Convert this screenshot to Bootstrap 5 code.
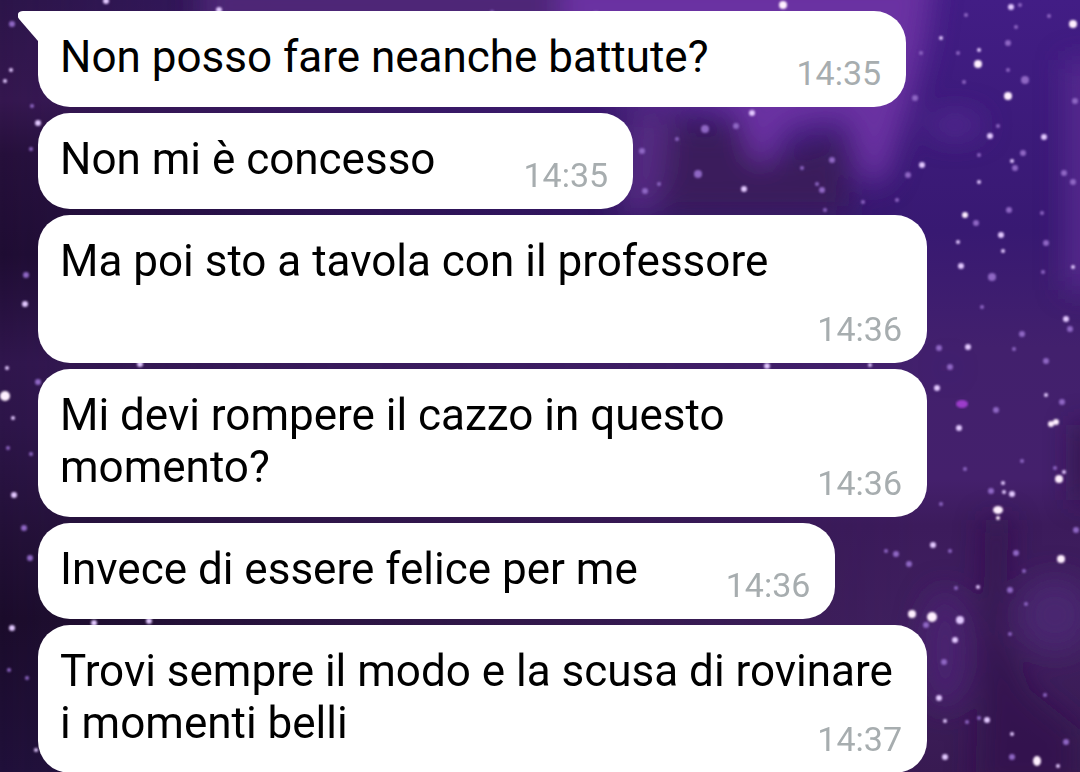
<!DOCTYPE html>
<html lang="it">
<head>
<meta charset="utf-8">
<meta name="viewport" content="width=device-width, initial-scale=1">
<title>Chat</title>
<link href="https://cdn.jsdelivr.net/npm/bootstrap@5.3.0/dist/css/bootstrap.min.css" rel="stylesheet">
<style>
body { font-family: Roboto, sans-serif; background: #2a1449; }
.chat { height: 100vh; }
.sky { position: absolute; inset: 0; width: 100%; height: 100%; }
.thread { gap: 6px; padding: 11px 153px 0 38px; }
.bubble { max-width: 100%; border-radius: 32px; padding: 20px 25px 14px 22px; font-size: 44px; line-height: 52px; color: #000; display: flow-root; }
.bubble.first { border-top-left-radius: 0; }
.tail { position: absolute; top: 0; left: -20px; width: 22px; height: 32px; }
.stamp { margin: 22px 0 0 88px; font-size: 34px; line-height: 40px; color: #a7adaf; }
</style>
</head>
<body>
<main class="chat position-relative overflow-hidden">
<svg class="sky" viewBox="0 0 1080 772" preserveAspectRatio="xMidYMid slice" aria-hidden="true">
<defs>
<linearGradient id="left" x1="0" y1="0" x2="0" y2="1"><stop offset="0" stop-color="#2c1549"/><stop offset=".13" stop-color="#35174f"/><stop offset=".2" stop-color="#26103b"/><stop offset=".33" stop-color="#1f0d33"/><stop offset=".47" stop-color="#30164d"/><stop offset=".55" stop-color="#2d1549"/><stop offset=".7" stop-color="#221036"/><stop offset=".8" stop-color="#1b0c2b"/><stop offset="1" stop-color="#20103a"/></linearGradient>
<linearGradient id="right" x1="0" y1="0" x2="0" y2="1"><stop offset="0" stop-color="#421d85"/><stop offset=".3" stop-color="#381972"/><stop offset=".45" stop-color="#42206d"/><stop offset=".62" stop-color="#44206c"/><stop offset=".68" stop-color="#3c1b5c"/><stop offset=".82" stop-color="#40205f"/><stop offset="1" stop-color="#381a52"/></linearGradient>
<linearGradient id="fade"><stop offset="0" stop-color="#fff" stop-opacity="0"/><stop offset=".3" stop-color="#fff" stop-opacity=".45"/><stop offset=".85" stop-color="#fff"/></linearGradient>
<mask id="side"><rect width="1080" height="772" fill="url(#fade)"/></mask>
<filter id="cloud" x="-50%" y="-50%" width="200%" height="200%"><feGaussianBlur stdDeviation="14"/></filter>
<filter id="glow" x="-5%" y="-5%" width="110%" height="110%"><feGaussianBlur stdDeviation="0.8"/></filter>
</defs>
<rect width="1080" height="772" fill="url(#left)"/>
<rect width="1080" height="772" fill="url(#right)" mask="url(#side)"/>
<g filter="url(#cloud)">
<rect x="200" y="-20" width="520" height="50" fill="#4f2778"/>
<path fill="#6a33a2" d="M560-30H935L925 45 908 110 885 180 865 185 845 120 790 128 765 170 750 160 735 112 560 80Z"/>
<path fill="#552a82" d="M625 110H680L655 215H620Z"/>
<path fill="#3b1c5b" d="M670 125H740L755 165 845 135 850 215H660Z"/>
<ellipse cx="955" cy="125" rx="28" ry="12" fill="#552b92"/>
<path fill="#5a2c92" opacity=".8" d="M1065 60H1110V290H1065Z"/>
<path fill="#321348" d="M1075 425H1100V500H1075Z"/>
<path fill="#32154c" opacity=".75" d="M985 520H1010L1004 630 1030 690 1080 730V790H975Z"/>
<ellipse cx="1055" cy="615" rx="38" ry="38" fill="#492670"/>
<ellipse cx="945" cy="650" rx="24" ry="60" fill="#482370"/>
<ellipse cx="948" cy="368" rx="3" ry="3" fill="#552ac0"/>
</g>
<g filter="url(#glow)" fill="#8f68c4">
<circle cx="12" cy="24" r="3"/><circle cx="32" cy="106" r="2"/><circle cx="31" cy="149" r="2"/><circle cx="26" cy="275" r="3"/><circle cx="38" cy="382" r="3"/><circle cx="24" cy="528" r="3"/><circle cx="30" cy="558" r="3"/><circle cx="27" cy="678" r="2"/><circle cx="8" cy="448" r="2"/><circle cx="31" cy="454" r="2"/><circle cx="9" cy="670" r="2"/>
<circle cx="492" cy="12" r="2"/><circle cx="596" cy="14" r="3"/><circle cx="655" cy="15" r="2"/><circle cx="813" cy="14" r="2"/><circle cx="642" cy="151" r="3"/><circle cx="645" cy="191" r="3"/><circle cx="705" cy="129" r="4"/><circle cx="677" cy="139" r="2"/><circle cx="736" cy="126" r="3"/><circle cx="698" cy="174" r="4"/><circle cx="659" cy="184" r="2"/><circle cx="802" cy="168" r="2"/><circle cx="832" cy="160" r="3"/><circle cx="817" cy="184" r="2"/><circle cx="822" cy="190" r="3"/><circle cx="825" cy="210" r="2"/><circle cx="863" cy="202" r="2"/><circle cx="897" cy="200" r="2"/><circle cx="915" cy="98" r="3"/>
<circle cx="966" cy="15" r="2"/><circle cx="1020" cy="5" r="2"/><circle cx="1049" cy="16" r="2"/><circle cx="1016" cy="27" r="2"/><circle cx="921" cy="53" r="2"/><circle cx="958" cy="53" r="2"/><circle cx="1008" cy="43" r="3"/><circle cx="1008" cy="70" r="2"/><circle cx="1025" cy="80" r="4"/><circle cx="964" cy="82" r="2"/><circle cx="1075" cy="101" r="3"/><circle cx="998" cy="126" r="2"/><circle cx="1023" cy="153" r="3"/><circle cx="979" cy="155" r="2"/><circle cx="1015" cy="168" r="3"/><circle cx="1064" cy="173" r="3"/><circle cx="1073" cy="182" r="3"/><circle cx="908" cy="175" r="3"/><circle cx="1009" cy="210" r="3"/><circle cx="976" cy="223" r="3"/><circle cx="1042" cy="213" r="2"/><circle cx="1046" cy="243" r="3"/><circle cx="992" cy="277" r="4"/><circle cx="1043" cy="272" r="2"/><circle cx="982" cy="307" r="2"/><circle cx="1022" cy="334" r="3"/><circle cx="1070" cy="329" r="3"/><circle cx="1014" cy="349" r="2"/><circle cx="1046" cy="361" r="3"/><circle cx="939" cy="348" r="3"/><circle cx="950" cy="367" r="3"/>
<circle cx="996" cy="410" r="3"/><circle cx="1062" cy="402" r="3"/><circle cx="1022" cy="461" r="2"/><circle cx="965" cy="469" r="2"/><circle cx="1055" cy="468" r="2"/><circle cx="991" cy="491" r="3"/><circle cx="941" cy="504" r="2"/><circle cx="886" cy="551" r="2"/><circle cx="896" cy="554" r="3"/><circle cx="909" cy="564" r="3"/><circle cx="950" cy="551" r="2"/><circle cx="1016" cy="553" r="3"/><circle cx="1024" cy="571" r="2"/><circle cx="1076" cy="530" r="3"/><circle cx="956" cy="588" r="2"/><circle cx="1010" cy="590" r="3"/><circle cx="1026" cy="604" r="2"/><circle cx="926" cy="625" r="3"/><circle cx="1010" cy="634" r="2"/><circle cx="944" cy="662" r="3"/><circle cx="967" cy="722" r="2"/><circle cx="1045" cy="695" r="2"/><circle cx="979" cy="718" r="2"/><circle cx="1012" cy="757" r="3"/><circle cx="1066" cy="742" r="3"/>
</g>
<ellipse cx="962" cy="404" rx="6" ry="4" fill="#9c3ccb" filter="url(#glow)"/>
<g filter="url(#glow)" fill="#e3c9ff">
<circle cx="11" cy="70" r="2"/><circle cx="5" cy="81" r="2"/><circle cx="38" cy="123" r="3"/><circle cx="25" cy="304" r="3"/><circle cx="7" cy="368" r="2"/><circle cx="13" cy="418" r="2"/><circle cx="14" cy="495" r="3"/><circle cx="12" cy="628" r="3"/><circle cx="36" cy="750" r="2"/><circle cx="106" cy="1" r="3"/><circle cx="219" cy="10" r="3"/><circle cx="140" cy="364" r="3"/><circle cx="94" cy="623" r="3"/><circle cx="149" cy="621" r="3"/><circle cx="767" cy="366" r="3"/><circle cx="870" cy="365" r="2"/><circle cx="752" cy="113" r="3"/><circle cx="744" cy="189" r="3"/>
<circle cx="1011" cy="7" r="3"/><circle cx="941" cy="38" r="2"/><circle cx="979" cy="50" r="2"/><circle cx="990" cy="136" r="3"/><circle cx="1044" cy="137" r="3"/><circle cx="1012" cy="161" r="2"/><circle cx="922" cy="165" r="3"/><circle cx="979" cy="182" r="2"/><circle cx="1001" cy="235" r="3"/><circle cx="958" cy="242" r="2"/><circle cx="1003" cy="251" r="2"/><circle cx="961" cy="266" r="3"/><circle cx="1073" cy="267" r="2"/><circle cx="1066" cy="319" r="3"/><circle cx="968" cy="347" r="3"/><circle cx="937" cy="388" r="3"/><circle cx="1046" cy="395" r="2"/><circle cx="959" cy="428" r="3"/><circle cx="1064" cy="472" r="2"/><circle cx="1003" cy="483" r="2"/><circle cx="1004" cy="492" r="2"/><circle cx="1012" cy="494" r="3"/><circle cx="933" cy="545" r="3"/><circle cx="978" cy="587" r="2"/><circle cx="960" cy="620" r="4"/><circle cx="955" cy="640" r="3"/><circle cx="939" cy="698" r="3"/><circle cx="945" cy="721" r="2"/><circle cx="987" cy="720" r="3"/><circle cx="945" cy="757" r="3"/><circle cx="1012" cy="734" r="2"/><circle cx="1058" cy="766" r="2"/>
</g>
<g filter="url(#glow)" fill="#fff0ff">
<circle cx="5" cy="396" r="5"/><circle cx="783" cy="5" r="4"/><circle cx="1073" cy="24" r="4"/><circle cx="978" cy="64" r="4"/><circle cx="1008" cy="96" r="4"/><circle cx="965" cy="215" r="3"/><circle cx="1051" cy="424" r="3"/><circle cx="1056" cy="422" r="3"/><circle cx="1059" cy="479" r="4"/><ellipse cx="998" cy="510" rx="5" ry="4"/><circle cx="998" cy="518" r="2"/><circle cx="1061" cy="559" r="4"/><circle cx="912" cy="614" r="4"/><circle cx="932" cy="617" r="5"/><ellipse cx="1037" cy="761" rx="4" ry="5"/>
</g>
</svg>
<div class="thread d-flex flex-column align-items-start position-relative">
<div class="bubble first bg-white position-relative"><svg class="tail" viewBox="0 0 22 32" aria-hidden="true"><path fill="#fff" d="M22 0H5C0 0-2 4 1 8L20 30H22Z"/></svg>Non posso fare neanche battute?<time class="stamp float-end">14:35</time></div>
<div class="bubble bg-white">Non mi è concesso<time class="stamp float-end">14:35</time></div>
<div class="bubble bg-white">Ma poi sto a tavola con il professore<time class="stamp float-end">14:36</time></div>
<div class="bubble bg-white">Mi devi rompere il cazzo in questo momento?<time class="stamp float-end">14:36</time></div>
<div class="bubble bg-white">Invece di essere felice per me<time class="stamp float-end">14:36</time></div>
<div class="bubble bg-white">Trovi sempre il modo e la scusa di rovinare i momenti belli<time class="stamp float-end">14:37</time></div>
</div>
</main>
<script src="https://cdn.jsdelivr.net/npm/bootstrap@5.3.0/dist/js/bootstrap.bundle.min.js"></script>
</body>
</html>
